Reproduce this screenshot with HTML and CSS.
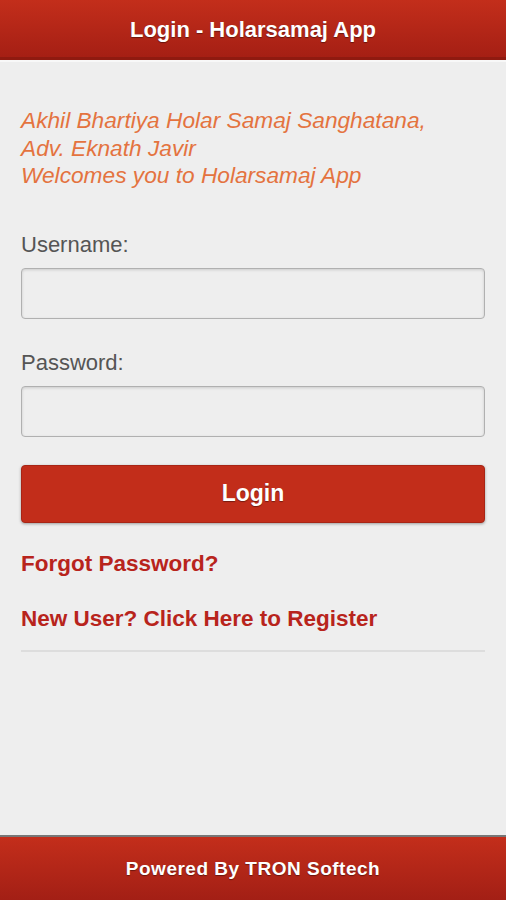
FILE: index.html
```html
<!DOCTYPE html>
<html lang="en">
<head>
    <meta charset="UTF-8">
    <meta name="viewport" content="width=device-width, initial-scale=1.0">
    <title>Login - Holarsamaj App</title>
    <link rel="stylesheet" href="styles.css">
</head>
<body>
    <div class="page">
        <div class="header">
            <h1>Login - Holarsamaj App</h1>
        </div>

        <div class="content">
            <p class="welcome">
                Akhil Bhartiya Holar Samaj Sanghatana,<br>
                Adv. Eknath Javir<br>
                Welcomes you to Holarsamaj App
            </p>

            <!-- Login Form -->
            <div class="field">
                <label for="username">Username:</label>
                <input type="text" id="username">
            </div>
            <div class="field">
                <label for="password">Password:</label>
                <input type="password" id="password">
            </div>
            <button class="login-btn">Login</button>

            <div class="links">
                <a href="#">Forgot Password?</a>
                <a href="#">New User? Click Here to Register</a>
            </div>
            <hr class="divider">
        </div>

        <div class="footer">Powered By TRON Softech</div>
    </div>
</body>
</html>
```

FILE: styles.css
```css
* {
    margin: 0;
    padding: 0;
    box-sizing: border-box;
    font-family: "Liberation Sans", Arial, sans-serif;
}

body {
    background: #eeeeee;
}

.page {
    display: flex;
    flex-direction: column;
    height: 100vh;
}

.header {
    height: 60px;
    display: flex;
    align-items: center;
    justify-content: center;
    background: linear-gradient(to bottom, #c32e1b, #a51f14);
    border-bottom: 3px solid #8f1a10;
    box-shadow: 0 2px 0 #f8f8f8;
}

.header h1 {
    color: white;
    font-size: 22px;
    font-weight: bold;
    text-shadow: 0 1px 1px rgba(0, 0, 0, 0.4);
    margin-top: 3px;
}

.content {
    flex: 1;
    padding: 0 21px;
}

.welcome {
    margin-top: 47px;
    color: #e4733f;
    font-style: italic;
    font-size: 22.7px;
    line-height: 27.5px;
}

.field {
    margin-top: 41px;
}

.field + .field {
    margin-top: 30px;
}

.field label {
    display: block;
    color: #555;
    font-size: 22px;
    line-height: 28px;
    margin-bottom: 9px;
}

.field input {
    display: block;
    width: 100%;
    height: 51px;
    background: #eeeeee;
    border: 1px solid #b0b0b0;
    border-radius: 4px;
    box-shadow: inset 0 1px 3px rgba(0, 0, 0, 0.15);
}

.login-btn {
    display: block;
    width: 100%;
    height: 58px;
    margin-top: 28px;
    background: #c22d1a;
    color: white;
    font-size: 23px;
    font-weight: bold;
    text-shadow: 0 1px 1px rgba(0, 0, 0, 0.4);
    border: 1px solid #a82515;
    border-radius: 4px;
    box-shadow: 0 1px 3px rgba(0, 0, 0, 0.35);
}

.links {
    display: flex;
    flex-direction: column;
    gap: 27px;
    margin-top: 27px;
}

.links a {
    color: #b8241c;
    font-size: 22.5px;
    font-weight: bold;
    line-height: 28px;
    text-decoration: none;
}

.divider {
    margin-top: 17px;
    border: none;
    border-top: 2px solid #dddddd;
}

.footer {
    height: 65px;
    display: flex;
    align-items: center;
    justify-content: center;
    background: linear-gradient(to bottom, #c32e1b, #a31f15);
    border-top: 2px solid #777;
    color: white;
    font-size: 19px;
    font-weight: bold;
    letter-spacing: 0.5px;
    text-shadow: 0 1px 1px rgba(0, 0, 0, 0.4);
}
```
